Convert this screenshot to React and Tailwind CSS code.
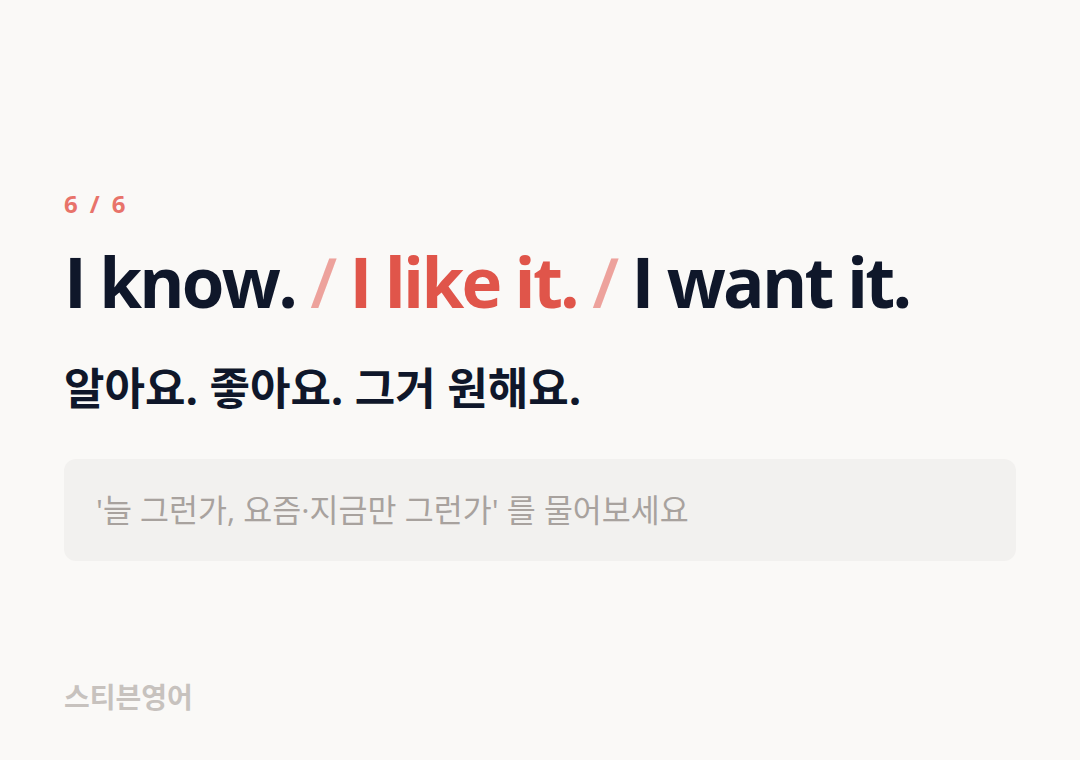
import React from "react";

const font = { fontFamily: '"Open Sans", "Noto Sans CJK KR", sans-serif' };

export default function App() {
  return (
    <div
      className="w-[1080px] h-[760px] bg-[#faf9f7] px-16 pt-[186px] flex flex-col"
      style={font}
    >
      <div className="text-[24px] font-bold tracking-[0.12em] text-[#e8736a] leading-[36px]">
        6 / 6
      </div>
      <h1 className="mt-[14px] text-[69px] font-bold leading-[90px] tracking-[-0.04em] text-[#0f172a] whitespace-nowrap">
        I know. <span className="font-semibold text-[#eda29c]">/</span>{" "}
        <span className="text-[#e0554a]">I like it.</span>{" "}
        <span className="font-semibold text-[#eda29c]">/</span> I want it.
      </h1>
      <p className="mt-[34px] text-[44px] font-bold leading-[56px] text-[#0f172a]">
        알아요. 좋아요. 그거 원해요.
      </p>
      <div className="mt-[43px] h-[102px] rounded-xl bg-[#f2f1ef] px-8 flex items-center">
        <span className="text-[31.5px] text-[#a8a29e]">
          '늘 그런가, 요즘·지금만 그런가' 를 물어보세요
        </span>
      </div>
      <div className="mt-[118px] text-[28px] font-bold text-[#c7c2be] leading-[36px]">
        스티븐영어
      </div>
    </div>
  );
}
